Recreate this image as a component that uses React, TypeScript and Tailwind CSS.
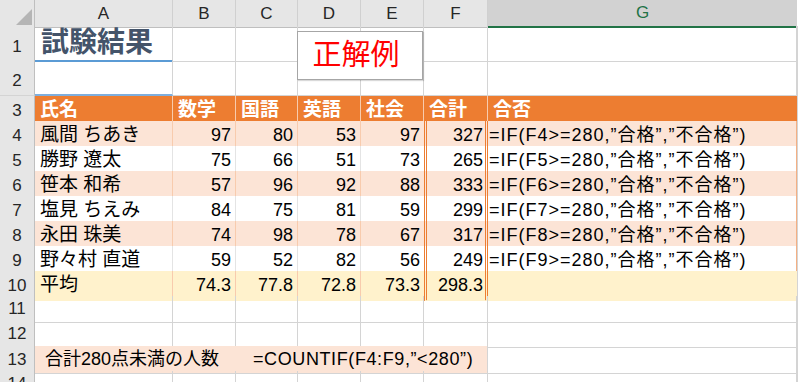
import React from "react";

const GRID = "grid grid-cols-[35px_138px_63px_62px_63px_63px_64px_309px_3px]";
const FONT = "font-['Liberation_Sans','Noto_Sans_CJK_JP',sans-serif]";

const STUDENTS: [string, number, number, number, number, number][] = [
  ["風間 ちあき", 97, 80, 53, 97, 327],
  ["勝野 遼太", 75, 66, 51, 73, 265],
  ["笹本 和希", 57, 96, 92, 88, 333],
  ["塩見 ちえみ", 84, 75, 81, 59, 299],
  ["永田 珠美", 74, 98, 78, 67, 317],
  ["野々村 直道", 59, 52, 82, 56, 249],
];

const AVERAGES = ["74.3", "77.8", "72.8", "73.3", "298.3"];

function Cell({ className = "", children }: { className?: string; children?: React.ReactNode }) {
  return (
    <div className={`flex items-center whitespace-nowrap border-b ${className}`}>
      {children}
    </div>
  );
}

function RowHead({ n, className = "" }: { n: number; className?: string }) {
  return (
    <div
      className={`flex items-center justify-center border-r border-b border-r-[#BFBFBF] border-b-[#D4D4D4] bg-[#E6E6E6] text-[17px] text-[#262626] ${className}`}
    >
      {n}
    </div>
  );
}

function Edge() {
  return <div className="border-l border-[#D4D4D4] bg-white" />;
}

// double orange rule either side of the total column
const TOTAL = "justify-end border-l-[3px] border-r-[3px] border-double border-l-[#ED7D31] border-r-[#ED7D31] pr-[2px] text-[18px] text-black";

export default function App() {
  const cols = ["A", "B", "C", "D", "E", "F"];

  return (
    <div className={`relative h-[382px] w-[800px] overflow-hidden bg-white ${FONT}`}>
      {/* column letters */}
      <div className={`${GRID} h-[26px]`}>
        <div className="flex items-end justify-end border-r border-b border-[#BFBFBF] bg-[#E6E6E6] pr-[2px] pb-[2px]">
          <svg width="16" height="16" viewBox="0 0 16 16">
            <polygon points="16,0 16,16 0,16" fill="#B5B5B5" />
          </svg>
        </div>
        {cols.map((c) => (
          <div
            key={c}
            className="flex items-center justify-center border-r border-b border-r-[#D0D0D0] border-b-[#BFBFBF] bg-[#E6E6E6] text-[17px] text-[#262626]"
          >
            {c}
          </div>
        ))}
        <div className="flex items-center justify-center border-b-2 border-[#217346] bg-[#D2D2D2] text-[17px] text-[#217346]">
          G
        </div>
        <div className="bg-white" />
      </div>

      {/* row 1 */}
      <div className={`${GRID} h-[35px]`}>
        <RowHead n={1} className="items-end pb-[2px]" />
        <Cell className="items-end border-r border-b-2 border-r-[#D4D4D4] border-b-[#5B9BD5] pl-[6px] text-[28px] leading-[34px] font-bold text-[#44546A]">
          試験結果
        </Cell>
        {[0, 1, 2, 3, 4, 5].map((i) => (
          <Cell key={i} className="border-r border-[#D4D4D4]" />
        ))}
        <Edge />
      </div>

      {/* row 2 */}
      <div className={`${GRID} h-[35px]`}>
        <RowHead n={2} className="items-end pb-[2px]" />
        <Cell className="border-r border-b-2 border-r-[#D4D4D4] border-b-[#7EAEDD]" />
        {[0, 1, 2, 3, 4, 5].map((i) => (
          <Cell key={i} className="border-r border-[#D4D4D4]" />
        ))}
        <Edge />
      </div>

      {/* row 3: table header */}
      <div className={`${GRID} h-[25px]`}>
        <RowHead n={3} />
        {["氏名", "数学", "国語", "英語", "社会", "合計", "合否"].map((h, i) => (
          <Cell
            key={h}
            className={`border-r border-b-[#F4B084] bg-[#ED7D31] pl-[5px] text-[19px] font-bold text-white ${
              i === 6 ? "border-r-[#ED7D31]" : "border-r-[#F8CBAD]"
            }`}
          >
            {h}
          </Cell>
        ))}
        <Edge />
      </div>

      {/* rows 4-9 */}
      {STUDENTS.map(([name, m, j, e, s, total], idx) => {
        const bg = idx % 2 === 0 ? "bg-[#FCE4D6]" : "bg-white";
        const vline = idx % 2 === 0 ? "border-r-[#F8CBAD]" : "border-r-[#E4E4E4]";
        return (
          <div key={name} className={`${GRID} h-[25px]`}>
            <RowHead n={idx + 4} />
            <Cell className={`${bg} border-r ${vline} border-b-[#F4B084] pl-[5px] text-[19px] text-black`}>{name}</Cell>
            {[m, j, e].map((v, k) => (
              <Cell key={k} className={`${bg} border-r ${vline} justify-end border-b-[#F4B084] pr-[4px] text-[18px] text-black`}>
                {v}
              </Cell>
            ))}
            <Cell className={`${bg} justify-end border-b-[#F4B084] pr-[4px] text-[18px] text-black`}>{s}</Cell>
            <Cell className={`${bg} ${TOTAL} border-b-[#F4B084]`}>{total}</Cell>
            <Cell className={`${bg} border-r border-r-[#F4B084] border-b-[#F4B084] pl-[1px] text-[18px] tracking-[1px] text-black`}>
              =IF(F{idx + 4}&gt;=280,”合格”,”不合格”)
            </Cell>
            <Edge />
          </div>
        );
      })}

      {/* row 10: averages */}
      <div className={`${GRID} h-[25px]`}>
        <RowHead n={10} />
        <Cell className="border-r border-r-[#F8CBAD] border-b-[#FFF2CC] bg-[#FFF2CC] pl-[5px] text-[19px] text-black">平均</Cell>
        {AVERAGES.slice(0, 3).map((v) => (
          <Cell key={v} className="justify-end border-r border-r-[#F8CBAD] border-b-[#FFF2CC] bg-[#FFF2CC] pr-[4px] text-[18px] text-black">
            {v}
          </Cell>
        ))}
        <Cell className="justify-end border-b-[#FFF2CC] bg-[#FFF2CC] pr-[4px] text-[18px] text-black">{AVERAGES[3]}</Cell>
        <Cell className={`${TOTAL} border-b-[#FFF2CC] bg-[#FFF2CC]`}>{AVERAGES[4]}</Cell>
        <Cell className="border-r border-r-[#FFF2CC] border-b-[#FFF2CC] bg-[#FFF2CC]" />
        <Edge />
      </div>

      {/* rows 11-12 */}
      {[11, 12].map((n) => (
        <div key={n} className={`${GRID} h-[25px]`}>
          <RowHead n={n} />
          {[0, 1, 2, 3, 4, 5, 6].map((i) => (
            <Cell key={i} className="border-r border-[#D4D4D4]" />
          ))}
          <Edge />
        </div>
      ))}

      {/* row 13: countif */}
      <div className={`${GRID} h-[25px]`}>
        <RowHead n={13} />
        <Cell className="col-span-6 border-r border-r-[#D4D4D4] border-b-[#D4D4D4] bg-[#FCE4D6] pl-[10px] text-[18px] text-black">
          <span className="w-[208px]">合計280点未満の人数</span>
          <span className="tracking-[0.6px]">=COUNTIF(F4:F9,”&lt;280”)</span>
        </Cell>
        <Cell className="border-r border-[#D4D4D4]" />
        <Edge />
      </div>

      {/* row 14 (cut off) */}
      <div className={`${GRID} h-[25px]`}>
        <RowHead n={14} />
        {[0, 1, 2, 3, 4, 5, 6].map((i) => (
          <Cell key={i} className="border-r border-[#D4D4D4]" />
        ))}
        <Edge />
      </div>

      {/* text box over D1:E2 */}
      <div className="absolute top-[31px] left-[297px] flex h-[49px] w-[126px] items-center justify-center border border-[#A6A6A6] bg-white pr-[8px] text-[29px] text-[#FF0000] shadow-[1px_1px_1px_rgba(0,0,0,0.15)]">
        正解例
      </div>
    </div>
  );
}
